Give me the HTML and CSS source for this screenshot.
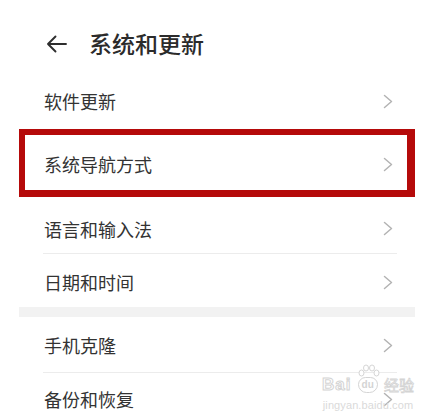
FILE: index.html
```html
<!DOCTYPE html>
<html lang="zh-CN">
<head>
<meta charset="utf-8">
<title>系统和更新</title>
<link rel="stylesheet" href="styles.css">
</head>
<body>
<div class="page">
  <header class="header">
    <svg class="back" width="21" height="18" viewBox="0 0 21 18" aria-hidden="true">
      <path d="M2 9 H20 M9.5 1.5 L2 9 L9.5 16.5" fill="none" stroke="#2e2e2e" stroke-width="1.9" stroke-linecap="round" stroke-linejoin="round"/>
    </svg>
    <h1 class="title">系统和更新</h1>
  </header>

  <div class="row row-a"><span class="label">软件更新</span><svg class="chev" width="10" height="15" viewBox="0 0 10 15"><path d="M1.5 1.5 L8.5 7.5 L1.5 13.5" fill="none" stroke="#b3b3b3" stroke-width="1.5" stroke-linecap="round" stroke-linejoin="round"/></svg></div>

  <div class="row row-b highlighted"><span class="label">系统导航方式</span><svg class="chev" width="10" height="15" viewBox="0 0 10 15"><path d="M1.5 1.5 L8.5 7.5 L1.5 13.5" fill="none" stroke="#b3b3b3" stroke-width="1.5" stroke-linecap="round" stroke-linejoin="round"/></svg></div>

  <div class="row row-c divided"><span class="label">语言和输入法</span><svg class="chev" width="10" height="15" viewBox="0 0 10 15"><path d="M1.5 1.5 L8.5 7.5 L1.5 13.5" fill="none" stroke="#b3b3b3" stroke-width="1.5" stroke-linecap="round" stroke-linejoin="round"/></svg></div>

  <div class="row row-d"><span class="label">日期和时间</span><svg class="chev" width="10" height="15" viewBox="0 0 10 15"><path d="M1.5 1.5 L8.5 7.5 L1.5 13.5" fill="none" stroke="#b3b3b3" stroke-width="1.5" stroke-linecap="round" stroke-linejoin="round"/></svg></div>

  <div class="band"></div>

  <div class="row row-e divided"><span class="label">手机克隆</span><svg class="chev" width="10" height="15" viewBox="0 0 10 15"><path d="M1.5 1.5 L8.5 7.5 L1.5 13.5" fill="none" stroke="#b3b3b3" stroke-width="1.5" stroke-linecap="round" stroke-linejoin="round"/></svg></div>

  <div class="row row-f"><span class="label">备份和恢复</span><svg class="chev" width="10" height="15" viewBox="0 0 10 15"><path d="M1.5 1.5 L8.5 7.5 L1.5 13.5" fill="none" stroke="#b3b3b3" stroke-width="1.5" stroke-linecap="round" stroke-linejoin="round"/></svg></div>

  <div class="watermark" aria-hidden="true">
    <svg class="wm-paw" width="22" height="14" viewBox="0 0 22 14">
      <g fill="#ffffff" stroke="#d6d6d6" stroke-width="1">
        <ellipse cx="3.5" cy="9" rx="2.5" ry="3"/>
        <ellipse cx="8" cy="4" rx="2.5" ry="3"/>
        <ellipse cx="14" cy="4" rx="2.5" ry="3"/>
        <ellipse cx="18.5" cy="9" rx="2.5" ry="3"/>
      </g>
    </svg>
    <div class="wm-top"><span class="wm-bai">Bai</span><span class="wm-du">du</span><span class="wm-jy">经验</span></div>
    <div class="wm-url">jingyan.baidu.com</div>
  </div>
</div>
</body>
</html>
```

FILE: styles.css
```css
html, body {
  margin: 0;
  padding: 0;
  background: #ffffff;
}

body {
  font-family: "Noto Sans CJK SC", "Noto Sans", sans-serif;
  color: #333333;
  overflow: hidden;
}

.page {
  position: relative;
  width: 396px;
  margin-left: 19px;
  background: #ffffff;
}

.header {
  height: 70px;
  box-sizing: border-box;
  padding-top: 26px;
  padding-left: 27px;
  display: flex;
  align-items: flex-start;
}

.back {
  margin-top: 9px;
  flex: none;
}

.title {
  margin: 0 0 0 22px;
  font-size: 23px;
  line-height: 34px;
  font-weight: 500;
  color: #2b2b2b;
}

.row {
  position: relative;
  display: flex;
  align-items: center;
  justify-content: space-between;
  box-sizing: border-box;
  padding-left: 25px;
  padding-right: 22px;
}

.label {
  font-size: 18px;
  line-height: 24px;
  color: #333333;
}

.chev {
  flex: none;
}

.row-a { height: 62px; }
.row-b { height: 64px; }
.row-c { height: 58px; padding-top: 7px; }
.row-d { height: 53px; padding-top: 3px; }
.row-e { height: 56px; }
.row-f { height: 52px; }

.divided::after {
  content: "";
  position: absolute;
  left: 24px;
  right: 18px;
  bottom: 0;
  height: 1px;
  background: #ececec;
}

.highlighted::before {
  content: "";
  position: absolute;
  top: -3px;
  bottom: -1px;
  left: 0;
  right: 0;
  border-style: solid;
  border-color: #b50a0a;
  border-width: 6px 8px 7px 6px;
  pointer-events: none;
}

.band {
  height: 10px;
  background: #f2f2f2;
}

.watermark {
  position: absolute;
  left: 303px;
  top: 364px;
  width: 92px;
  color: #dcdcdc;
  font-family: "Liberation Sans", "Noto Sans CJK SC", sans-serif;
  text-align: center;
}

.wm-paw {
  display: block;
  margin-left: 36px;
  height: 14px;
}

.wm-top {
  display: flex;
  align-items: center;
  justify-content: space-between;
  line-height: 18px;
  margin-top: -2px;
}

.wm-bai {
  font-size: 17px;
  font-weight: bold;
  color: #ffffff;
  -webkit-text-stroke: 1px #d4d4d4;
  letter-spacing: 1px;
}

.wm-du {
  display: inline-block;
  width: 18px;
  height: 14px;
  border-radius: 8px 8px 9px 9px;
  border: 1px solid #d4d4d4;
  font-size: 10px;
  line-height: 14px;
  font-weight: bold;
  color: #d4d4d4;
}

.wm-jy {
  font-family: "Noto Sans CJK SC", sans-serif;
  font-size: 15px;
  color: #ffffff;
  -webkit-text-stroke: 0.8px #d4d4d4;
}

.wm-url {
  font-size: 11px;
  line-height: 12px;
  margin-top: 5px;
  color: #dadada;
  letter-spacing: 0.1px;
}
```
